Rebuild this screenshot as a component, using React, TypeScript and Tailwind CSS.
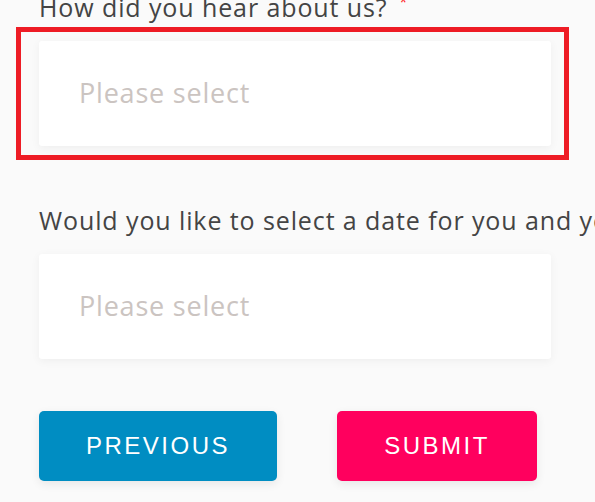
import React from "react";

const labelCls =
  "block text-[25px] leading-[32px] text-[#444444] tracking-[0.9px] whitespace-nowrap";
const fieldCls =
  "flex h-[105px] w-[512px] items-center rounded-[3px] bg-white pl-[40px] text-[27px] tracking-[0.8px] text-[#cbc4c1] shadow-[0_2px_10px_rgba(0,0,0,0.05)]";

function SelectField({ label, required }: { label: string; required?: boolean }) {
  return (
    <div className="flex flex-col">
      <label className={labelCls}>
        {label}
        {required && (
          <span className="relative -top-[10px] ml-[12px] text-[14px] leading-[0] text-[#ff1a1a]">
            *
          </span>
        )}
      </label>
      <div className={fieldCls + " mt-[18px]"}>Please select</div>
    </div>
  );
}

export default function App() {
  return (
    <div
      className="relative h-[502px] w-[595px] overflow-hidden bg-[#fafafa] pl-[39px]"
      style={{ fontFamily: '"Open Sans", "Noto Sans", sans-serif' }}
    >
      <div className="-mt-[9px] flex flex-col">
        <SelectField label="How did you hear about us?" required />

        <div className="mt-[58px]">
          <SelectField label="Would you like to select a date for you and your partner?" />
        </div>

        <div
          className="mt-[52px] flex gap-[60px]"
          style={{ fontFamily: '"Liberation Sans", Arial, sans-serif' }}
        >
          <button className="h-[70px] w-[238px] rounded-[5px] bg-[#008dc2] text-[24px] tracking-[2.5px] text-white shadow-[0_3px_10px_rgba(0,0,0,0.08)]">
            PREVIOUS
          </button>
          <button className="h-[70px] w-[200px] rounded-[5px] bg-[#ff005e] text-[24px] tracking-[2.5px] text-white shadow-[0_3px_10px_rgba(0,0,0,0.08)]">
            SUBMIT
          </button>
        </div>
      </div>

      <div className="pointer-events-none absolute left-[16px] top-[27px] h-[133px] w-[553px] border-[5px] border-[#ee1c25]" />
    </div>
  );
}
